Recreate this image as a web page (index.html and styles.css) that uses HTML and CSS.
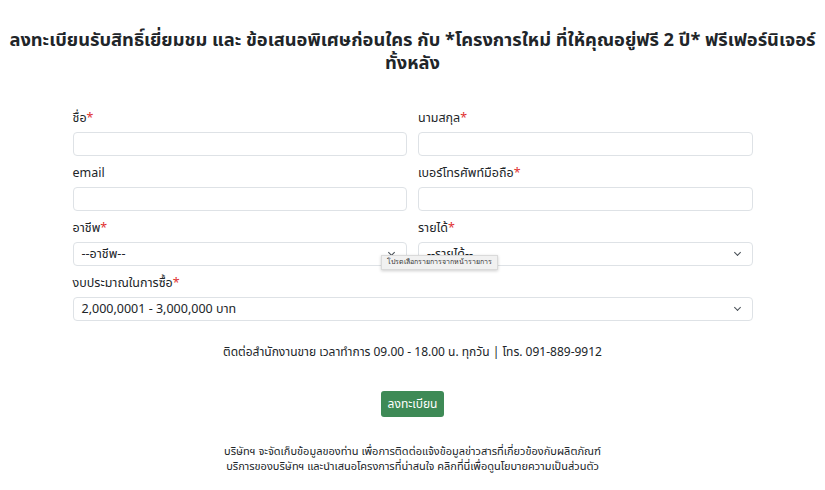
FILE: index.html
```html
<!DOCTYPE html>
<html lang="th">
<head>
    <meta charset="UTF-8">
    <meta name="viewport" content="width=device-width, initial-scale=1.0">
    <title>ลงทะเบียน</title>
    <link rel="stylesheet" href="styles.css">
</head>
<body>
    <h1 class="title">ลงทะเบียนรับสิทธิ์เยี่ยมชม และ ข้อเสนอพิเศษก่อนใคร กับ *โครงการใหม่ ที่ให้คุณอยู่ฟรี 2 ปี* ฟรีเฟอร์นิเจอร์<br>ทั้งหลัง</h1>

    <form class="register-form">
        <div class="row">
            <div class="field">
                <label>ชื่อ<span class="req">*</span></label>
                <input type="text">
            </div>
            <div class="field">
                <label>นามสกุล<span class="req">*</span></label>
                <input type="text">
            </div>
        </div>
        <div class="row">
            <div class="field">
                <label>email</label>
                <input type="text">
            </div>
            <div class="field">
                <label>เบอร์โทรศัพท์มือถือ<span class="req">*</span></label>
                <input type="text">
            </div>
        </div>
        <div class="row">
            <div class="field">
                <label>อาชีพ<span class="req">*</span></label>
                <div class="select">--อาชีพ--</div>
            </div>
            <div class="field tip-anchor">
                <label>รายได้<span class="req">*</span></label>
                <div class="select">--รายได้--</div>
                <div class="tooltip">โปรดเลือกรายการจากหน้ารายการ</div>
            </div>
        </div>
        <div class="row single">
            <div class="field">
                <label>งบประมาณในการซื้อ<span class="req">*</span></label>
                <div class="select">2,000,0001 - 3,000,000 บาท</div>
            </div>
        </div>

        <p class="contact">ติดต่อสำนักงานขาย เวลาทำการ 09.00 - 18.00 น. ทุกวัน | โทร. 091-889-9912</p>

        <div class="actions">
            <button type="button" class="submit">ลงทะเบียน</button>
        </div>

        <p class="privacy">บริษัทฯ จะจัดเก็บข้อมูลของท่าน เพื่อการติดต่อแจ้งข้อมูลข่าวสารที่เกี่ยวข้องกับผลิตภัณฑ์<br>บริการของบริษัทฯ และนำเสนอโครงการที่น่าสนใจ คลิกที่นี่เพื่อดูนโยบายความเป็นส่วนตัว</p>
    </form>
</body>
</html>
```

FILE: styles.css
```css
:root {
    --text-color: #212529;
    --border-color: #dee2e6;
    --green: #3e8a56;
    --red: #e03131;
}

* {
    margin: 0;
    padding: 0;
    box-sizing: border-box;
    font-family: 'Noto Sans', 'Noto Sans Thai', sans-serif;
}

body {
    background-color: #ffffff;
    color: var(--text-color);
    padding-top: 27px;
}

.title {
    font-size: 18.3px;
    font-weight: 700;
    line-height: 23px;
    text-align: center;
    padding: 0 4px;
}

.register-form {
    width: 680px;
    margin: 36px auto 0;
}

.row {
    display: grid;
    grid-template-columns: 1fr 1fr;
    gap: 11px;
    margin-bottom: 8px;
}

.row.single {
    grid-template-columns: 1fr;
}

.field {
    display: flex;
    flex-direction: column;
}

label {
    font-size: 12.5px;
    line-height: 18px;
    margin-bottom: 5px;
}

.req {
    color: var(--red);
}

input,
.select {
    height: 24px;
    border: 1px solid var(--border-color);
    border-radius: 4px;
    background-color: #ffffff;
    font-size: 12.5px;
    padding: 0 8px;
}

.select {
    display: flex;
    align-items: center;
    position: relative;
    line-height: 22px;
}

.select::after {
    content: '';
    position: absolute;
    right: 12px;
    top: 7px;
    width: 4px;
    height: 4px;
    border-right: 1.5px solid #495057;
    border-bottom: 1.5px solid #495057;
    transform: rotate(45deg);
}

.tip-anchor {
    position: relative;
}

.tooltip {
    position: absolute;
    left: -37px;
    top: 36px;
    background-color: #f1f1f1;
    border: 1px solid #dadada;
    box-shadow: 0 1px 3px rgba(0, 0, 0, 0.2);
    font-size: 7px;
    line-height: 11px;
    padding: 1px 5px;
    color: #333333;
    white-space: nowrap;
    font-family: 'DejaVu Sans', sans-serif;
}

.contact {
    text-align: center;
    font-size: 12px;
    margin-top: 22px;
}

.actions {
    display: flex;
    justify-content: center;
    margin-top: 30px;
}

.submit {
    background-color: var(--green);
    color: #ffffff;
    border: none;
    border-radius: 3px;
    font-size: 12px;
    padding: 4px 7px;
    height: 26px;
}

.privacy {
    text-align: center;
    font-size: 11px;
    line-height: 15px;
    margin-top: 26px;
}
```
